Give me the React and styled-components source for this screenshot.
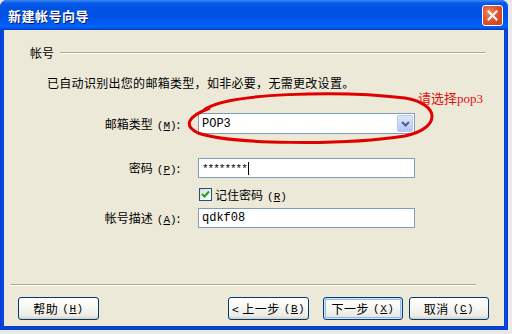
import React from 'react';
import styled, { createGlobalStyle } from 'styled-components';

const Global = createGlobalStyle`
  html, body { margin: 0; padding: 0; }
  body {
    background: #dcdcdc;
    font-family: "Noto Sans CJK SC", "Noto Sans", sans-serif;
    font-size: 12px;
    color: #000;
  }
`;

const Screen = styled.div`
  width: 512px;
  height: 334px;
  overflow: hidden;
  background: #e9e9e9;
`;

const Window = styled.div`
  position: relative;
  width: 508px;
  height: 330px;
  box-sizing: border-box;
  display: flex;
  flex-direction: column;
  border-radius: 7px 7px 0 0;
  background: linear-gradient(to right, #0831d9 0, #0a4be0 2px, #0842d0 4px, #0842d0 504px, #0a4be0 506px, #0831d9 508px);
  overflow: hidden;
`;

const TitleBar = styled.div`
  height: 30px;
  flex: none;
  display: flex;
  align-items: center;
  justify-content: space-between;
  padding: 0 5px 0 8px;
  box-sizing: border-box;
  background: linear-gradient(
    to bottom,
    #3d8cf5 0,
    #0a5ae8 3px,
    #0053e6 8px,
    #0050e4 16px,
    #005ef5 24px,
    #0062f8 27px,
    #0048d8 29px,
    #003ac8 30px
  );
`;

const Title = styled.span`
  color: #fff;
  font-weight: bold;
  font-size: 13px;
  letter-spacing: 0.5px;
  text-shadow: 1px 1px 0 #0a1e6a;
`;

const CloseBtn = styled.div`
  width: 21px;
  height: 21px;
  box-sizing: border-box;
  border: 1px solid #fff;
  border-radius: 3px;
  background: radial-gradient(circle at 35% 35%, #f08a6a 0, #e0552f 45%, #c63b1a 100%);
  display: flex;
  align-items: center;
  justify-content: center;
`;

const Client = styled.div`
  flex: 1;
  margin: 0 4px 4px 4px;
  background: #ece9d8;
  position: relative;
  display: flex;
  flex-direction: column;
`;

const GroupHeader = styled.div`
  display: flex;
  align-items: center;
  margin: 16px 18px 0 26px;
  height: 14px;
  line-height: 14px;
`;

const GroupLine = styled.div`
  flex: 1;
  margin-left: 6px;
  height: 1px;
  background: #aca899;
  border-bottom: 1px solid #fff;
`;

const Description = styled.div`
  margin: 16px 0 0 43px;
  height: 14px;
  line-height: 14px;
  letter-spacing: 0.3px;
`;

const Form = styled.div`
  display: grid;
  grid-template-columns: 176px 217px;
  column-gap: 18px;
  align-items: center;
  margin-top: 23px;
`;

const Label = styled.div`
  text-align: right;
  margin-top: ${p => p.$mt || 0}px;
  height: ${p => p.$h}px;
  line-height: ${p => p.$h}px;
  white-space: nowrap;
`;

const Mn = styled.span`
  text-decoration: underline;
`;

const Latin = styled.span`
  font-family: "Liberation Mono", monospace;
  font-size: 11px;
  margin-left: 4px;
`;

const FieldBox = styled.div`
  margin-top: ${p => p.$mt || 0}px;
  height: ${p => p.$h}px;
  box-sizing: border-box;
  border: 1px solid #7f9db9;
  background: #fff;
  display: flex;
  align-items: center;
  padding-left: 3px;
  font-family: "Liberation Mono", monospace;
  font-size: 12px;
`;

const SelectValue = styled.span`
  flex: 1;
`;

const DropBtn = styled.div`
  width: 16px;
  height: 17px;
  margin-right: 1px;
  box-sizing: border-box;
  border: 1px solid #b6c8ec;
  border-radius: 2px;
  background: linear-gradient(to bottom, #dce6fb 0, #c6d5f7 60%, #b2c6f2 100%);
  display: flex;
  align-items: center;
  justify-content: center;
`;

const Caret = styled.span`
  display: inline-block;
  width: 1px;
  height: 13px;
  background: #000;
  margin-left: 1px;
`;

const Stars = styled.span`
  font-size: 11px;
  letter-spacing: -1px;
  position: relative;
  top: 1px;
`;

const CheckRow = styled.div`
  margin-top: ${p => p.$mt || 0}px;
  display: flex;
  align-items: center;
  height: 13px;
  padding-left: 1px;
`;

const CheckBox = styled.div`
  width: 13px;
  height: 13px;
  box-sizing: border-box;
  border: 1px solid #1c5180;
  background: linear-gradient(135deg, #dcdcd7 0, #f4f4f0 60%, #fff 100%);
  display: flex;
  align-items: center;
  justify-content: center;
  margin-right: 3px;
`;

const Spacer = styled.div`
  flex: 1;
`;

const Separator = styled.div`
  margin: 0 0 0 6px;
  width: 466px;
  height: 1px;
  background: #aca899;
  border-bottom: 1px solid #fff;
`;

const ButtonRow = styled.div`
  display: flex;
  align-items: center;
  margin: 11px 0 6px 14px;
  height: 23px;
`;

const Button = styled.div`
  width: ${p => p.$w || 80}px;
  height: 23px;
  box-sizing: border-box;
  margin-left: ${p => p.$ml || 0}px;
  border: 1px solid #003c74;
  border-radius: 3px;
  background: linear-gradient(to bottom, #ffffff 0, #f8f8f5 40%, #ecebe4 85%, #d6d0c5 100%);
  box-shadow: ${p => p.$default
    ? 'inset 0 0 0 1px #cee7ff, inset 0 0 0 2px #98b8ea'
    : 'inset 0 -1px 0 #d6d0c5'};
  display: flex;
  align-items: center;
  justify-content: center;
  white-space: nowrap;
  letter-spacing: 0.5px;
`;

const Overlay = styled.svg`
  position: absolute;
  left: 0;
  top: 0;
  pointer-events: none;
`;

const Note = styled.div`
  position: absolute;
  left: 418px;
  top: 88px;
  color: #e01010;
  font-size: 13px;
  white-space: nowrap;
  font-family: "Noto Sans CJK SC", serif;
`;

const NoteLatin = styled.span`
  font-family: "Liberation Serif", serif;
  font-size: 13px;
`;

export default function App() {
  return (
    <Screen>
      <Global />
      <Window>
        <TitleBar>
          <Title>新建帐号向导</Title>
          <CloseBtn>
            <svg width="11" height="11" viewBox="0 0 11 11">
              <path d="M1.5 1.5 L9.5 9.5 M9.5 1.5 L1.5 9.5" stroke="#fff" strokeWidth="2" strokeLinecap="square" />
            </svg>
          </CloseBtn>
        </TitleBar>
        <Client>
          <GroupHeader>
            <span>帐号</span>
            <GroupLine />
          </GroupHeader>
          <Description>已自动识别出您的邮箱类型，如非必要，无需更改设置。</Description>
          <Form>
            <Label $h={21}>邮箱类型<Latin>(<Mn>M</Mn>)</Latin>:</Label>
            <FieldBox $h={21}>
              <SelectValue>POP3</SelectValue>
              <DropBtn>
                <svg width="9" height="6" viewBox="0 0 9 6">
                  <path d="M1 1 L4.5 4.5 L8 1" stroke="#4d6185" strokeWidth="2" fill="none" />
                </svg>
              </DropBtn>
            </FieldBox>

            <Label $h={20} $mt={24}>密码<Latin>(<Mn>P</Mn>)</Latin>:</Label>
            <FieldBox $h={20} $mt={24}>
              <Stars>********</Stars>
              <Caret />
            </FieldBox>

            <div />
            <CheckRow $mt={10}>
              <CheckBox>
                <svg width="9" height="9" viewBox="0 0 9 9">
                  <path d="M1 4 L3.5 6.5 L8 1.5" stroke="#21a121" strokeWidth="2" fill="none" />
                </svg>
              </CheckBox>
              <span>记住密码<Latin>(<Mn>R</Mn>)</Latin></span>
            </CheckRow>

            <Label $h={20} $mt={7}>帐号描述<Latin>(<Mn>A</Mn>)</Latin>:</Label>
            <FieldBox $h={20} $mt={7}>qdkf08</FieldBox>
          </Form>
          <Spacer />
          <Separator />
          <ButtonRow>
            <Button $w={81}>帮助<Latin>(<Mn>H</Mn>)</Latin></Button>
            <Button $w={81} $ml={129}>&lt; 上一步<Latin>(<Mn>B</Mn>)</Latin></Button>
            <Button $w={80} $ml={14} $default>下一步<Latin>(<Mn>X</Mn>)</Latin></Button>
            <Button $w={80} $ml={6}>取消<Latin>(<Mn>C</Mn>)</Latin></Button>
          </ButtonRow>
        </Client>
        <Overlay width="508" height="330" viewBox="0 0 508 330">
          <path
            d="M204 110 C 225 93, 340 90, 405 98 C 440 104, 442 128, 405 136 C 340 146, 230 144, 198 133 C 184 126, 186 117, 210 108"
            stroke="#e00000"
            strokeWidth="3"
            fill="none"
          />
        </Overlay>
        <Note>请选择<NoteLatin>pop3</NoteLatin></Note>
      </Window>
    </Screen>
  );
}
